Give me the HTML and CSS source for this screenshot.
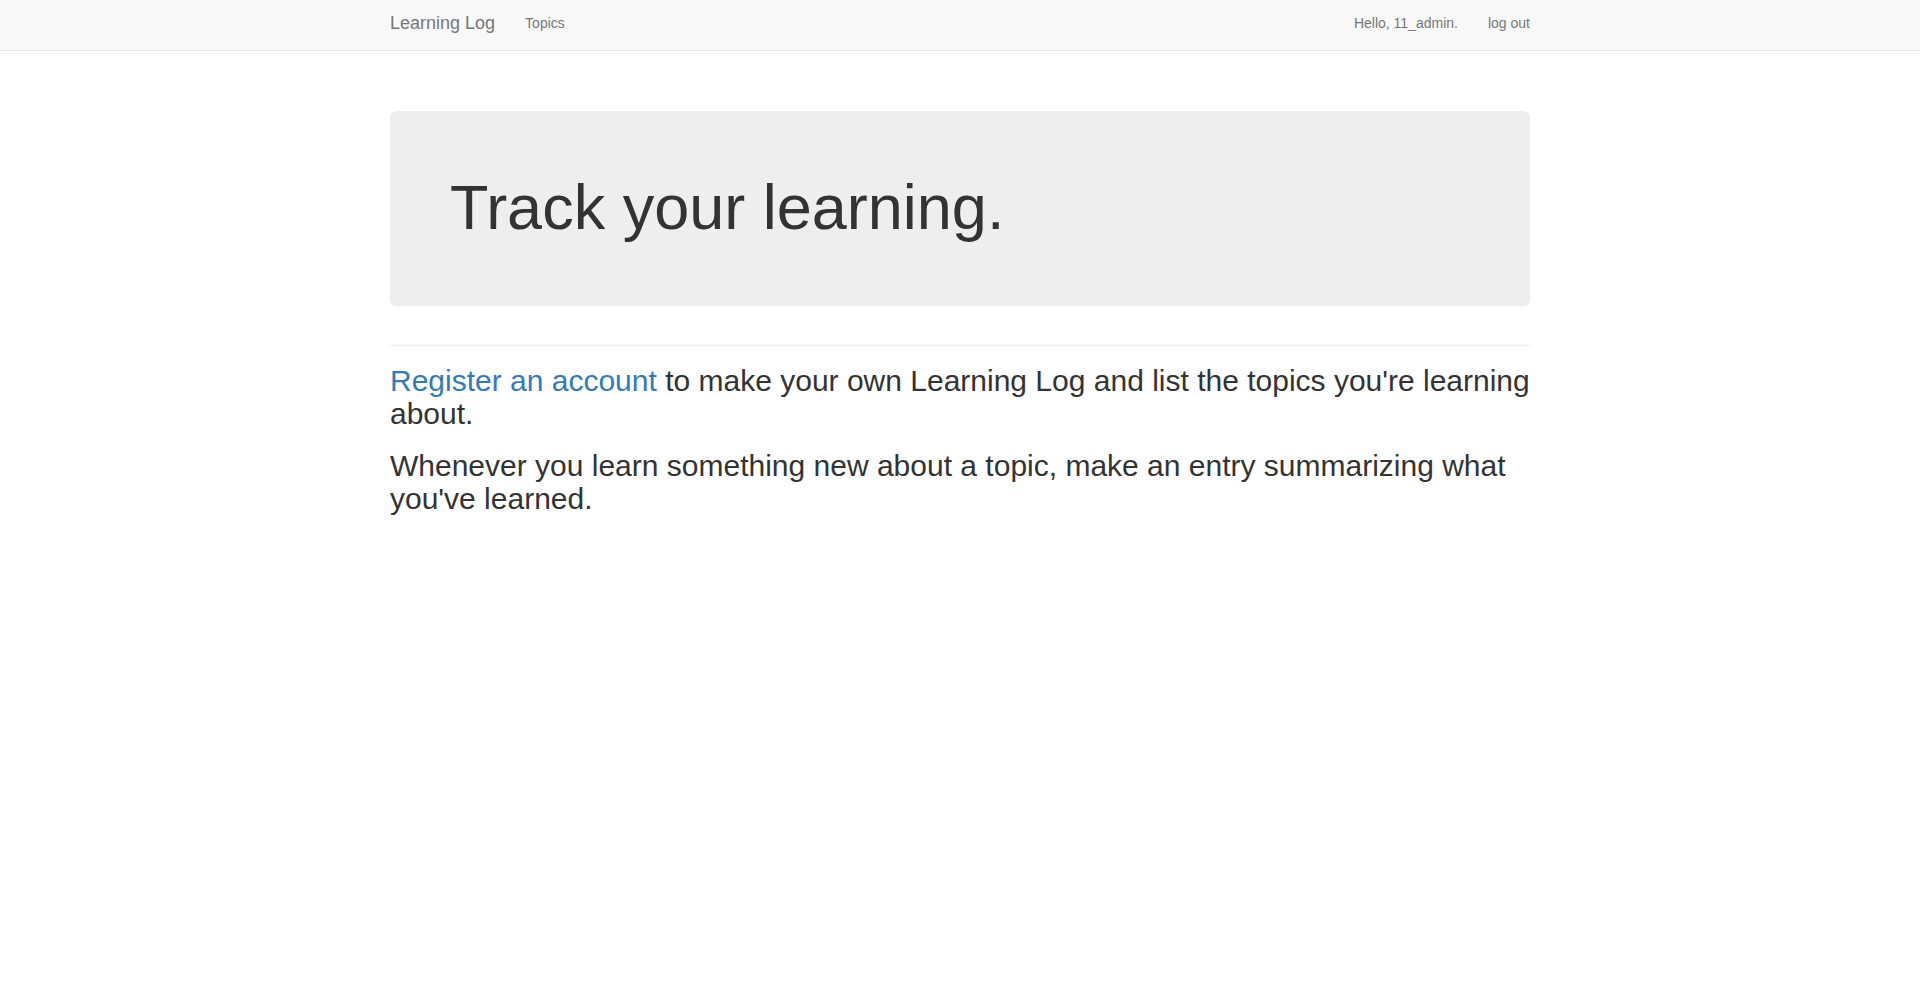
FILE: index.html
```html
<!DOCTYPE html>
<html lang="en">
<head>
<meta charset="utf-8">
<title>Learning Log</title>
<link rel="stylesheet" href="styles.css">
</head>
<body>
<nav class="navbar">
  <div class="container nav-inner">
    <a class="brand" href="#">Learning Log</a>
    <ul class="nav">
      <li><a href="#">Topics</a></li>
    </ul>
    <ul class="nav nav-right">
      <li><span class="nav-text">Hello, 11_admin.</span></li>
      <li><a href="#">log out</a></li>
    </ul>
  </div>
</nav>
<main class="container content">
  <div class="page-header">
    <div class="jumbotron">
      <h1>Track your learning.</h1>
    </div>
  </div>
  <div class="intro">
    <p class="lead"><a href="#">Register an account</a> to make your own Learning Log and list the topics you're learning about.</p>
    <p class="lead">Whenever you learn something new about a topic, make an entry summarizing what you've learned.</p>
  </div>
</main>
</body>
</html>
```
FILE: styles.css
```css
* { box-sizing: border-box; }
html, body { margin: 0; padding: 0; }
body {
  font-family: "Liberation Sans", Arial, sans-serif;
  font-size: 14px;
  line-height: 1.42857;
  color: #333;
  background: #fff;
}
a { color: #337ab7; text-decoration: none; }

.container {
  width: 1170px;
  margin: 0 auto;
  padding: 0 15px;
}

.navbar {
  height: 51px;
  background: #f8f8f8;
  border-bottom: 1px solid #e7e7e7;
  margin-bottom: 20px;
}
.nav-inner {
  display: flex;
  align-items: stretch;
  height: 50px;
}
.brand {
  display: block;
  height: 50px;
  padding: 13px 15px 17px;
  margin-left: -15px;
  font-size: 18px;
  line-height: 20px;
  color: #777;
}
.nav {
  display: flex;
  list-style: none;
  margin: 0;
  padding: 0;
}
.nav li a, .nav li .nav-text {
  display: block;
  padding: 13px 15px 17px;
  line-height: 20px;
  color: #777;
}
.nav-right {
  margin-left: auto;
  margin-right: -15px;
}

.content {
  display: flow-root;
}
.page-header {
  margin: 40px 0 18px;
  padding-bottom: 9px;
  border-bottom: 1px solid #eee;
}
.jumbotron {
  background: #eee;
  border-radius: 6px;
  padding: 48px 60px;
  margin-bottom: 30px;
}
.jumbotron h1 {
  margin: 14px 0 16px;
  font-size: 63px;
  line-height: 69px;
  font-weight: 500;
  color: inherit;
}

.lead {
  margin: 0 0 19px;
  font-size: 30px;
  line-height: 33px;
  font-weight: 400;
}
```
